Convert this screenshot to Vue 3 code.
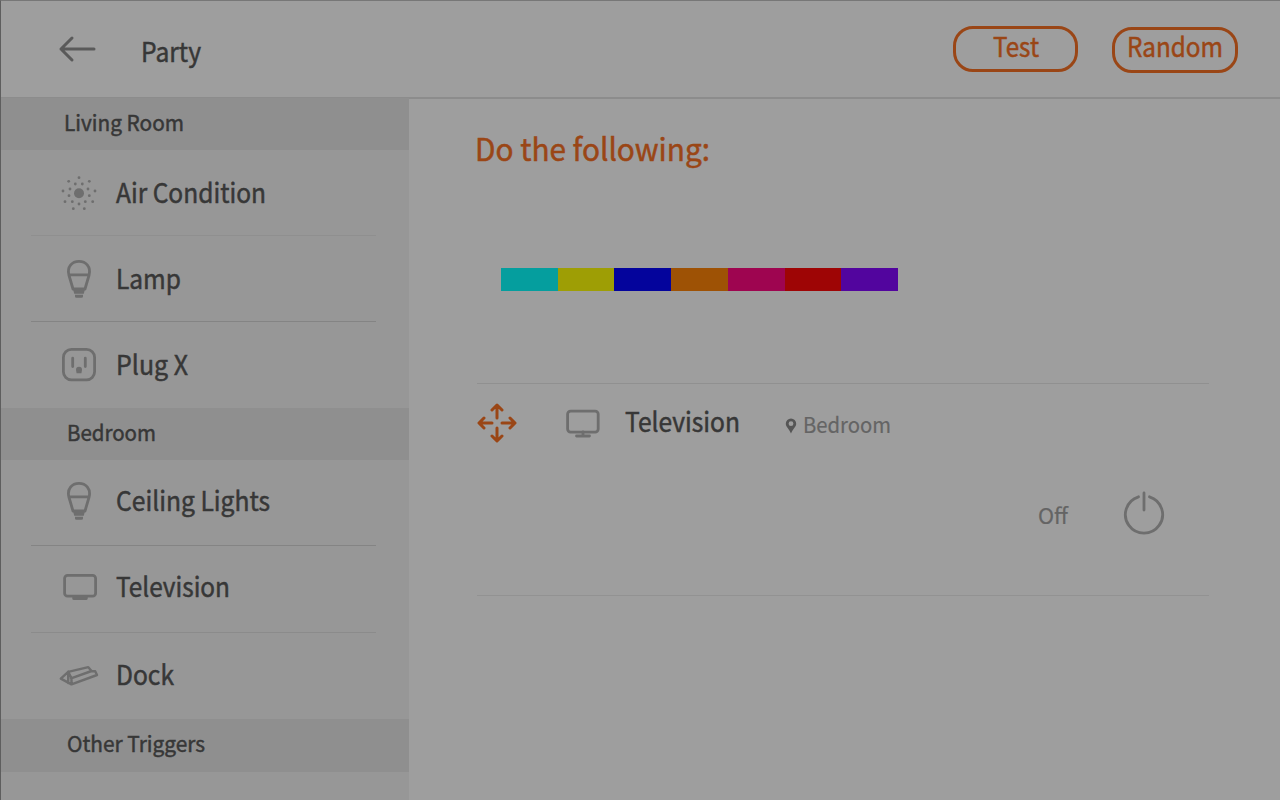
<script setup>
const sections = [
  {
    title: 'Living Room', width: 120, left: 64, height: 52,
    items: [
      { name: 'Air Condition', icon: 'air', width: 150, height: 86, lift: 0, tone: 'faint' },
      { name: 'Lamp', icon: 'bulb', width: 65, height: 86, lift: 0, tone: 'strong' },
      { name: 'Plug X', icon: 'plug', width: 72, height: 86, lift: 0, tone: 'none' },
    ],
  },
  {
    title: 'Bedroom', width: 89, left: 67, height: 52,
    items: [
      { name: 'Ceiling Lights', icon: 'bulb', width: 154, height: 86, lift: 3, tone: 'strong' },
      { name: 'Television', icon: 'tv', width: 114, height: 87, lift: 5, tone: 'mid' },
      { name: 'Dock', icon: 'dock', width: 58, height: 86, lift: 2, tone: 'none' },
    ],
  },
  { title: 'Other Triggers', width: 138, left: 67, height: 53, items: [] },
]

const palette = ['#059e9e', '#9e9e05', '#04049c', '#9e5205', '#9e0550', '#9e0505', '#52059e']

const dots = [
  [20, 4.7], [9.7, 8.3], [30.3, 8.3], [16.3, 11], [23.3, 11], [11, 16], [29, 16],
  [4, 18], [36, 18], [10, 22.7], [30.3, 22.7], [6, 28.7], [13.3, 28.7],
  [26.3, 28.7], [33.7, 28.7], [20, 31], [14.3, 35.7], [25.3, 35.7],
]

// Condenses a label horizontally so that it fills the given width.
const vFit = {
  mounted(el, { value }) {
    const natural = el.getBoundingClientRect().width
    el.style.transform = `scaleX(${value / natural})`
    el.style.marginRight = `${value - natural}px`
  },
}
</script>

<template>
  <div class="screen">
    <header class="topbar">
      <svg class="back" width="40" height="30" viewBox="0 0 40 30">
        <path d="M37 15H4M15 4L4 15L15 26" />
      </svg>
      <h1 class="label title" v-fit="60">Party</h1>
      <div class="actions">
        <button class="pill"><span class="label" v-fit="46">Test</span></button>
        <button class="pill random"><span class="label" v-fit="96">Random</span></button>
      </div>
    </header>

    <div class="body">
      <aside class="sidebar">
        <section v-for="s in sections" :key="s.title">
          <h2 class="group" :style="{ height: s.height + 'px', paddingLeft: s.left - 1 + 'px' }">
            <span class="label" v-fit="s.width">{{ s.title }}</span>
          </h2>
          <div
            v-for="i in s.items"
            :key="i.name"
            class="row"
            :class="i.tone"
            :style="{ height: i.height + 'px', paddingBottom: i.lift + 'px' }"
          >
            <svg class="icon" width="40" height="40" viewBox="0 0 40 40">
              <g v-if="i.icon === 'air'" class="solid">
                <circle cx="20" cy="20.3" r="5" />
                <circle v-for="(d, n) in dots" :key="n" :cx="d[0]" :cy="d[1]" r="1.4" />
              </g>
              <g v-else-if="i.icon === 'bulb'">
                <path d="M9.9 16C7.8 7.8 13 2.4 20 2.4S32.1 7.8 30.1 16L26 30H14ZM10 15.9H30" />
                <path class="solid" d="M14 30H26L24.8 34.8H15.2ZM16 35.8H24V37.5Q24 38.8 22.6 38.8H17.4Q16 38.8 16 37.5Z" />
              </g>
              <g v-else-if="i.icon === 'plug'">
                <rect x="4.4" y="4.4" width="31.2" height="30.4" rx="8" />
                <path d="M13.7 13.2V21.6M26.3 13.2V21.6" />
                <path class="solid" d="M17.6 28.2L17 24.8A3 3 0 0 1 23 24.8L22.4 28.2Z" />
              </g>
              <g v-else-if="i.icon === 'tv'">
                <rect x="5.6" y="8.3" width="31" height="20.9" rx="3" />
                <path class="solid" d="M13.3 29.5H28.7V31.5Q28.7 33 27 33H15Q13.3 33 13.3 31.5Z" />
              </g>
              <g v-else class="thin">
                <path d="M1.8 23.6L9.2 16.8L29.3 12.2L32.6 16L36.2 16.2L38 20L12.5 29.4ZM9.2 16.8L12.5 23.2V29.4M12 23.4L32.6 16M9.2 16.8V28" />
              </g>
            </svg>
            <span class="label" v-fit="i.width">{{ i.name }}</span>
          </div>
        </section>
      </aside>

      <main class="main">
        <h2 class="label heading" v-fit="235">Do the following:</h2>
        <div class="palette">
          <i v-for="c in palette" :key="c" :style="{ background: c }"></i>
        </div>
        <article class="device">
          <div class="device-head">
            <svg class="move" width="40" height="40" viewBox="0 0 40 40">
              <path d="M20 15V2.5M15 7L20 2L25 7M20 25V37.5M15 33L20 38L25 33M15 20H2.5M7 15L2 20L7 25M25 20H37.5M33 15L38 20L33 25" />
            </svg>
            <svg class="icon screen-icon" width="40" height="40" viewBox="0 0 40 40">
              <rect x="4.6" y="8.1" width="30.6" height="21" rx="3" />
              <path d="M20 29V32M13.5 33H26.5" />
            </svg>
            <span class="label name" v-fit="115">Television</span>
            <svg class="pin" width="12" height="16" viewBox="0 0 12 16">
              <path fill-rule="evenodd" d="M6 .5A5.2 5.2 0 0 1 11.2 5.7C11.2 8.8 7.8 11 6 15.5C4.2 11 .8 8.8 .8 5.7A5.2 5.2 0 0 1 6 .5ZM6 3.3A2.4 2.4 0 1 0 6 8.1A2.4 2.4 0 1 0 6 3.3Z" />
            </svg>
            <span class="label place" v-fit="88">Bedroom</span>
          </div>
          <div class="power">
            <span class="label state" v-fit="30">Off</span>
            <svg class="icon" width="44" height="48" viewBox="0 0 44 48">
              <path d="M16.5 7.8A18.6 18.6 0 1 0 27.5 7.8M22 4V21" />
            </svg>
          </div>
        </article>
      </main>
    </div>
  </div>
</template>

<style>
html,
body {
  margin: 0;
  background: #9e9e9e;
  overflow: hidden;
}
</style>

<style scoped>
.screen {
  box-sizing: border-box;
  width: 1280px;
  height: 800px;
  overflow: hidden;
  display: flex;
  flex-direction: column;
  background: #9e9e9e;
  border-top: 1px solid #777;
  border-left: 1px solid #5e5e5e;
  color: #373737;
  font-family: "Noto Sans CJK SC", "Noto Sans", sans-serif;
}
svg {
  display: block;
  flex: none;
  fill: none;
  stroke-linecap: round;
  stroke-linejoin: round;
}
h1,
h2 {
  margin: 0;
  font-weight: 400;
}
.label {
  display: inline-block;
  flex: none;
  white-space: nowrap;
  transform-origin: 0 50%;
  font-size: 26.5px;
  line-height: 26px;
  -webkit-text-stroke: 0.5px currentColor;
}
.topbar {
  box-sizing: border-box;
  flex: none;
  height: 98px;
  display: flex;
  align-items: flex-start;
  padding-left: 56px;
  border-bottom: 2px solid #8c8c8c;
}
.back {
  margin-top: 32.5px;
  stroke: #5a5a5a;
  stroke-width: 3;
}
.title {
  margin: 37px 0 0 44px;
}
.actions {
  display: flex;
  gap: 34px;
  margin: 25px 42px 0 auto;
}
.pill {
  box-sizing: border-box;
  width: 125px;
  height: 46px;
  padding: 0 0 6px;
  display: flex;
  align-items: center;
  justify-content: center;
  border: 3px solid #9a4616;
  border-radius: 20px;
  background: none;
  color: #9a4616;
  font-family: inherit;
}
.random {
  width: 126px;
  margin-top: 1px;
  padding-bottom: 8px;
}
.body {
  flex: 1;
  display: flex;
  min-height: 0;
}
.sidebar {
  width: 408.4px;
  flex: none;
  margin-top: -1px;
  background: #979797;
}
.group {
  box-sizing: border-box;
  display: flex;
  align-items: center;
  padding-bottom: 7px;
  background: #8f8f8f;
}
.group .label {
  font-size: 22px;
}
.row {
  box-sizing: border-box;
  display: flex;
  align-items: center;
  margin: 0 33px 0 30px;
  padding-left: 28px;
  border-bottom: 1px solid transparent;
}
.row .label {
  margin-left: 17px;
  padding-bottom: 2px;
}
.faint { border-color: #8f8f8f; }
.mid { border-color: #8b8b8b; }
.strong { border-color: #848484; }
.icon {
  stroke: #6e6e6e;
  stroke-width: 2.8;
}
.solid {
  fill: #6e6e6e;
  stroke: none;
}
.thin {
  stroke-width: 2.4;
}
.main {
  flex: 1;
  padding: 36px 71px 0 67px;
}
.heading {
  display: block;
  width: max-content;
  margin-left: -1px;
  font-size: 31px;
  line-height: 26px;
  color: #9a4616;
}
.palette {
  display: flex;
  width: 397px;
  height: 23px;
  margin: 107px 0 0 24.6px;
}
.palette i {
  flex: 1;
}
.device {
  box-sizing: border-box;
  height: 213px;
  margin: 92px 0 0 1px;
  border-top: 1px solid #909090;
  border-bottom: 1px solid #929292;
}
.device-head {
  display: flex;
  align-items: center;
  height: 78px;
}
.move {
  stroke: #9a4616;
  stroke-width: 3;
}
.screen-icon {
  margin-left: 46px;
}
.name {
  margin-left: 22px;
  padding-bottom: 4px;
}
.pin {
  margin: 6px 0 0 45px;
  fill: #555;
}
.place,
.state {
  font-size: 22px;
  color: #646464;
  -webkit-text-stroke-width: 0.2px;
}
.place {
  margin-left: 6px;
}
.power {
  display: flex;
  align-items: center;
  justify-content: flex-end;
  margin-top: 27px;
  padding-right: 43px;
}
.power .icon {
  margin-left: 54px;
}
.power .label {
  margin-top: 1px;
}
</style>
